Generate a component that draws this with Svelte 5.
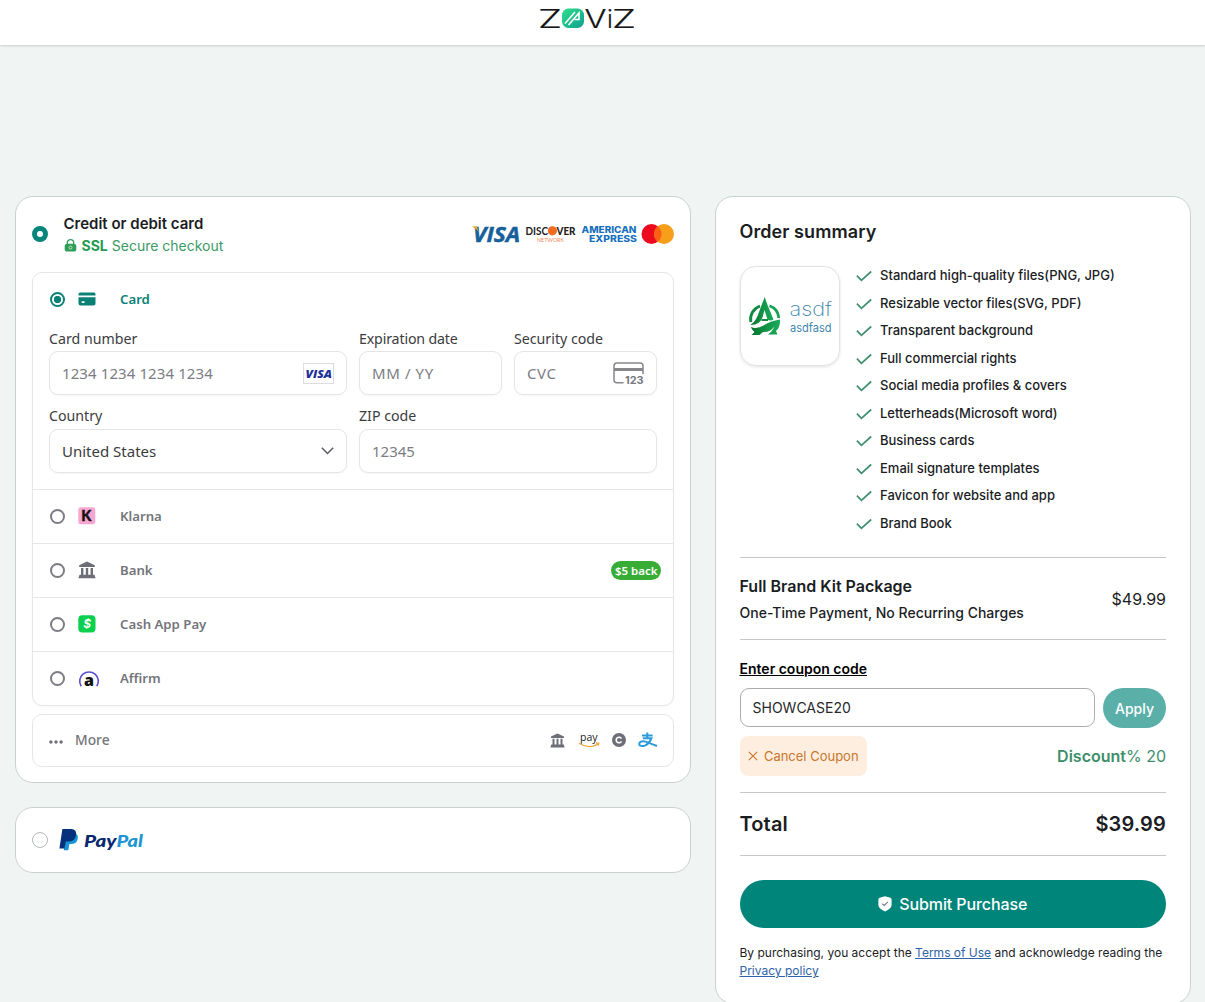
<script>
  const features = [
    'Standard high-quality files(PNG, JPG)',
    'Resizable vector files(SVG, PDF)',
    'Transparent background',
    'Full commercial rights',
    'Social media profiles & covers',
    'Letterheads(Microsoft word)',
    'Business cards',
    'Email signature templates',
    'Favicon for website and app',
    'Brand Book',
  ];

  const methods = [
    { id: 'klarna', label: 'Klarna' },
    { id: 'bank', label: 'Bank', badge: '$5 back' },
    { id: 'cashapp', label: 'Cash App Pay' },
    { id: 'affirm', label: 'Affirm' },
  ];

  let coupon = $state('SHOWCASE20');
  let selected = $state('card');
</script>

{#snippet bankIcon(size)}
  <svg width={size} height={size} viewBox="0 0 18 18" fill="#6d6e78">
    <path d="M9 0.5 L16.8 4.2 V6 H1.2 V4.2 Z M3 7 H5.4 V14 H3 Z M7.8 7 H10.2 V14 H7.8 Z M12.6 7 H15 V14 H12.6 Z M1.5 13.7 H16.5 L17.6 17.3 H0.4 Z" />
  </svg>
{/snippet}

<header>
  <svg width="97" height="30" viewBox="0 -5 97 30">
    <defs>
      <linearGradient id="tile" x1="0" y1="0" x2="1" y2="1">
        <stop offset="0" stop-color="#2fe08b" />
        <stop offset="1" stop-color="#0f9f90" />
      </linearGradient>
    </defs>
    <g font-family="Inter, sans-serif" font-weight="300" font-size="25" fill="#161616" stroke="#161616" stroke-width="0.2">
      <text x="-1" y="20.5" textLength="24" lengthAdjust="spacingAndGlyphs">Z</text>
      <text x="45.5" y="20.5" textLength="22" lengthAdjust="spacingAndGlyphs">V</text>
      <text x="68" y="20.5">i</text>
      <text x="73" y="20.5" textLength="24" lengthAdjust="spacingAndGlyphs">Z</text>
    </g>
    <rect x="23" y="1.5" width="22" height="19.5" rx="6.5" fill="url(#tile)" />
    <path d="M26 16.5 L36 5 M29.5 18 L40 6 V12.5 H35.5" fill="none" stroke="#fff" stroke-width="1.6" />
  </svg>
</header>

<main>
  <div class="left">
    <section class="panel pay">
      <div class="pay-head">
        <span class="radio-on"></span>
        <div class="pay-title">
          <strong>Credit or debit card</strong>
          <span class="ssl">
            <svg width="13" height="13" viewBox="0 0 13 13">
              <path d="M3.3 6 V3.8 A3.2 3.2 0 0 1 9.7 3.8 V6" fill="none" stroke="#2f9e57" stroke-width="1.3" />
              <rect x="0.7" y="4.8" width="11.6" height="7.8" rx="2.6" fill="#2f9e57" />
              <circle cx="6.5" cy="8.6" r="1.5" fill="none" stroke="#d9f0e0" stroke-width="0.8" />
            </svg>
            <b>SSL</b><span>Secure checkout</span>
          </span>
        </div>
        <svg class="brands" width="204" height="32" viewBox="0 -4 204 32">
          <text x="3" y="20" font-family="Open Sans, sans-serif" font-style="italic" font-weight="700" font-size="21.5" fill="#175f9b" stroke="#175f9b" stroke-width="0.5" textLength="47" lengthAdjust="spacingAndGlyphs">VISA</text>
          <path d="M1.5 4.5 H7 L8.5 10 Q6 6 1.5 4.5Z" fill="#f0a52b" />
          <g font-family="Lato, sans-serif" font-weight="900" font-size="12" fill="#222">
            <text x="55.5" y="13" textLength="22.5" lengthAdjust="spacingAndGlyphs" font-weight="700">DISC</text>
            <text x="86.5" y="13" textLength="19" lengthAdjust="spacingAndGlyphs">VER</text>
          </g>
          <circle cx="82.4" cy="8.8" r="4.6" fill="#f26a21" />
          <text x="67" y="20" font-family="Lato, sans-serif" font-size="6.5" fill="#ec8a58" textLength="27" lengthAdjust="spacingAndGlyphs">NETWORK</text>
          <g font-family="Inter, sans-serif" font-weight="800" font-size="8.6" fill="#1870bd">
            <text x="111.5" y="11.2" textLength="55" lengthAdjust="spacingAndGlyphs">AMERICAN</text>
            <text x="119" y="19.7" textLength="48" lengthAdjust="spacingAndGlyphs">EXPRESS</text>
          </g>
          <circle cx="181.5" cy="12" r="10" fill="#eb0a1e" />
          <circle cx="194" cy="12" r="10" fill="#f79e1b" />
          <path d="M187.75 4.2 A10 10 0 0 1 187.75 19.8 A10 10 0 0 1 187.75 4.2Z" fill="#fb6013" />
        </svg>
      </div>

      <div class="methods">
        <div class="card-form">
          <div class="card-row">
            <span class="ring ring-on"></span>
            <span class="icon">
              <svg width="18" height="14" viewBox="0 0 18 14">
                <path d="M2 0.5 H16 Q17.5 0.5 17.5 2 V3.5 H0.5 V2 Q0.5 0.5 2 0.5Z M0.5 5.3 H17.5 V11.5 Q17.5 13.5 15.5 13.5 H2.5 Q0.5 13.5 0.5 11.5Z" fill="#0a8176" />
                <rect x="3.5" y="9.2" width="3.3" height="1.7" rx="0.8" fill="#fff" />
              </svg>
            </span>
            <span class="name active">Card</span>
          </div>

          <div class="fields">
            <label class="wide">
              <span>Card number</span>
              <div class="input">
                <span class="digits">1234 1234 1234 1234</span>
                <svg width="31" height="21" viewBox="0 0 31 21">
                  <rect x="0.5" y="0.5" width="30" height="20" fill="#fff" stroke="#dcdce2" />
                  <text x="2.5" y="14.6" font-family="Open Sans, sans-serif" font-style="italic" font-weight="800" font-size="11" fill="#1d2f9b" textLength="26.5" lengthAdjust="spacingAndGlyphs">VISA</text>
                </svg>
              </div>
            </label>
            <label>
              <span class="tight">Expiration date</span>
              <div class="input"><span class="spaced">MM / YY</span></div>
            </label>
            <label>
              <span>Security code</span>
              <div class="input">
                <span class="spaced">CVC</span>
                <svg width="31" height="26" viewBox="0 -2 31 26">
                  <path d="M10.5 20.8 H4 Q1 20.8 1 17.8 V4 Q1 1 4 1 H27 Q30 1 30 4 V12" fill="none" stroke="#85868c" stroke-width="1.5" />
                  <rect x="1" y="6" width="29" height="3" fill="#85868c" />
                  <text x="12" y="21.5" font-family="Inter, sans-serif" font-weight="700" font-size="10.5" fill="#77787e" textLength="18.7" lengthAdjust="spacingAndGlyphs">123</text>
                </svg>
              </div>
            </label>
            <label class="wide second">
              <span>Country</span>
              <div class="input value">
                <span>United States</span>
                <svg width="13" height="8" viewBox="0 0 13 8">
                  <path d="M0.8 0.8 L6.5 6.5 L12.2 0.8" fill="none" stroke="#5b5c62" stroke-width="1.5" />
                </svg>
              </div>
            </label>
            <label class="wide second">
              <span>ZIP code</span>
              <div class="input"><span>12345</span></div>
            </label>
          </div>
        </div>

        {#each methods as m}
          <div class="row" role="button" tabindex="-1" onclick={() => (selected = m.id)} onkeydown={() => {}}>
            <span class="ring"></span>
            <span class="icon">
              {#if m.id === 'klarna'}
                <svg width="18" height="18" viewBox="0 0 18 18">
                  <rect x="0.3" y="0.3" width="17" height="17" rx="2.5" fill="#f7a8d0" />
                  <text x="3.2" y="14" font-family="Lato, sans-serif" font-weight="900" font-size="14.5" fill="#17101a" stroke="#17101a" stroke-width="0.4">K</text>
                </svg>
              {:else if m.id === 'bank'}
                {@render bankIcon(18)}
              {:else if m.id === 'cashapp'}
                <svg width="18" height="18" viewBox="0 0 18 18">
                  <rect x="0.3" y="0.3" width="17.2" height="17.2" rx="4" fill="#0bcf4f" />
                  <text x="5.2" y="13.2" font-family="Inter, sans-serif" font-style="italic" font-weight="600" font-size="12" fill="#fff">$</text>
                </svg>
              {:else}
                <svg class="affirm" width="22" height="18" viewBox="0 0 22 18">
                  <path d="M3.2 16.3 A9.3 9.3 0 1 1 18.8 16.3" fill="none" stroke="#5a4fcf" stroke-width="1.6" />
                  <text x="6" y="16.3" font-family="Open Sans, sans-serif" font-weight="800" font-size="16" fill="#101010">a</text>
                </svg>
              {/if}
            </span>
            <span class="name">{m.label}</span>
            {#if m.badge}<span class="badge">{m.badge}</span>{/if}
          </div>
        {/each}
      </div>

      <div class="more">
        <svg class="dots" width="14" height="4" viewBox="0 0 14 4" fill="#6d6e78">
          <circle cx="1.9" cy="2" r="1.7" /><circle cx="7" cy="2" r="1.7" /><circle cx="12.1" cy="2" r="1.7" />
        </svg>
        <span>More</span>
        <div class="more-icons">
          {@render bankIcon(15)}
          <svg width="22" height="22" viewBox="0 -3 22 22">
            <text x="2" y="9" font-family="Open Sans, sans-serif" font-size="11" fill="#222" textLength="17.5" lengthAdjust="spacingAndGlyphs">pay</text>
            <path d="M1 11.3 Q10.5 17.5 19.5 12.4 M18 11 L20.8 11.3 L20 13.8" fill="none" stroke="#f0a63a" stroke-width="1.3" />
          </svg>
          <svg width="14" height="14" viewBox="0 0 14 14">
            <circle cx="7" cy="7" r="7" fill="#6d6e78" />
            <path d="M9.4 5.6 A2.8 2.8 0 1 0 9.4 8.4" fill="none" stroke="#fff" stroke-width="1.6" />
          </svg>
          <svg width="20" height="16" viewBox="0 0 20 16">
            <path d="M4 3.4 H14.6 M9.3 0.4 V6.3" fill="none" stroke="#2c9bdb" stroke-width="2" />
            <path d="M4.8 6.3 H13.4 Q11.6 11.2 7.4 13.3 Q4 14.8 1.9 13.5 Q0.4 11.8 2.3 10 Q4.4 8.7 7.6 9.6 Q11 10.8 19 14" fill="none" stroke="#2c9bdb" stroke-width="2" />
          </svg>
        </div>
      </div>
    </section>

    <section class="panel paypal">
      <span class="radio-off"></span>
      <svg width="86" height="26" viewBox="0 0 86 26">
        <path d="M7 6 H15 Q20 7 18.6 12.5 Q17.4 17 12 17 H10.4 L9.3 23.3 H4.8Z" fill="#1696d6" />
        <path d="M3.4 2 H12 Q18.5 2.3 16.9 9 Q15.5 14.5 9.5 14.5 H6.8 L5.5 21.5 H0.4Z" fill="#04307c" />
        <g font-family="Lato, sans-serif" font-weight="900" font-style="italic" font-size="17.2">
          <text x="25" y="20.4" fill="#07286f" textLength="32.5" lengthAdjust="spacingAndGlyphs">Pay</text>
          <text x="57.5" y="20.4" fill="#1d95d3" textLength="26.5" lengthAdjust="spacingAndGlyphs">Pal</text>
        </g>
      </svg>
    </section>
  </div>

  <aside class="panel summary">
    <h2>Order summary</h2>
    <div class="overview">
      <div class="thumb">
        <svg width="84" height="42" viewBox="0 0 84 42">
          <defs>
            <linearGradient id="mark" x1="0" y1="0" x2="1" y2="0">
              <stop offset="0" stop-color="#08752f" />
              <stop offset="1" stop-color="#19ad5b" />
            </linearGradient>
          </defs>
          <g transform="translate(0 1)">
            <g fill="none" stroke="#118a42">
              <path d="M2.8 26 A14.2 14.2 0 0 1 12 10" stroke-width="2.8" />
              <path d="M21.5 9.7 A14.2 14.2 0 0 1 30.8 22" stroke="#17a355" stroke-width="2.8" />
            </g>
            <path d="M16.7 1 L19.5 9 L25.5 23.5 Q22 25.5 19.5 23.5 L16.5 14 L14.3 22 Q11 29.5 2.4 29 Q7 26 9.5 20Z" fill="url(#mark)" />
            <path d="M13.5 24 H20" stroke="#118a42" stroke-width="2" />
            <path d="M2.8 31 Q9 33.5 15.5 29.5 Q22 25 32 23.5 Q32.5 31 28 35 L29.5 38.5 H20 Q24 36 26.5 30.5 Q22 36.5 15 36 L11.5 39 H3.5 L6.5 36 Q4 34 2.8 31Z" fill="url(#mark)" />
          </g>
          <g font-family="Inter, sans-serif" fill="#3e87ad">
            <text x="41.5" y="20.5" font-size="19" font-weight="200" textLength="42.5" lengthAdjust="spacingAndGlyphs">asdf</text>
            <text x="42" y="36.5" font-size="11.5" textLength="41.5" lengthAdjust="spacingAndGlyphs">asdfasd</text>
          </g>
        </svg>
      </div>
      <ul>
        {#each features as f}
          <li>
            <svg width="16" height="12" viewBox="0 0 16 12">
              <path d="M0.9 5.6 L5.4 10.3 L15.2 1.5" fill="none" stroke="#3f8f6c" stroke-width="1.7" />
            </svg>
            {f}
          </li>
        {/each}
      </ul>
    </div>

    <div class="package">
      <div>
        <h3>Full Brand Kit Package</h3>
        <p>One-Time Payment, No Recurring Charges</p>
      </div>
      <span class="price">$49.99</span>
    </div>

    <div class="coupon">
      <span class="coupon-title">Enter coupon code</span>
      <div class="coupon-row">
        <input bind:value={coupon} />
        <button class="apply">Apply</button>
      </div>
      <div class="coupon-row discount-row">
        <button class="cancel">
          <svg width="10" height="10" viewBox="0 0 10 10">
            <path d="M0.8 0.8 L9.2 9.2 M9.2 0.8 L0.8 9.2" stroke="#c9772b" stroke-width="1.1" />
          </svg>
          Cancel Coupon
        </button>
        <span class="discount"><b>Discount</b>% 20</span>
      </div>
    </div>

    <div class="total"><span>Total</span><span>$39.99</span></div>

    <button class="submit">
      <svg width="14" height="16" viewBox="0 0 14 16">
        <path d="M7 0.3 L12.4 1.8 Q13.6 2.2 13.6 3.5 V9 Q13.4 13 7 15.4 Q0.6 13 0.4 9 V3.5 Q0.4 2.2 1.6 1.8Z" fill="#fff" />
        <path d="M4.3 7.8 L6.3 9.4 L9.8 5.9" fill="none" stroke="#6d7f80" stroke-width="1.1" />
      </svg>
      Submit Purchase
    </button>
    <p class="legal">
      By purchasing, you accept the <a href="#terms">Terms of Use</a> and acknowledge reading the
      <a href="#privacy">Privacy policy</a>
    </p>
  </aside>
</main>

<style>
  :global(body) {
    background: #f0f4f3;
    font-family: Inter, sans-serif;
    color: #1b1d1f;
    overflow: hidden;
  }
  svg { display: block; flex: none; overflow: visible; }
  button, input { font-family: inherit; }
  header {
    height: 45px;
    box-sizing: border-box;
    padding: 2px 0 0 539px;
    background: #fff;
    box-shadow: 0 1px 2px rgba(0, 0, 0, 0.16);
  }
  main {
    display: flex;
    align-items: flex-start;
    gap: 24px;
    padding: 151px 14px 0 15px;
  }
  .panel {
    box-sizing: border-box;
    background: #fff;
    border: 1px solid #c9d2d0;
    border-radius: 18px;
  }
  .left { width: 676px; display: flex; flex-direction: column; gap: 24px; }
  .pay { height: 587px; padding: 0 16px; }
  .pay-head { height: 75px; padding-bottom: 1px; display: flex; align-items: center; box-sizing: border-box; }
  .radio-on {
    width: 16px;
    height: 16px;
    box-sizing: border-box;
    border: 5px solid #06857a;
    border-radius: 50%;
  }
  .pay-title { margin-left: 15.5px; padding-top: 1px; display: flex; flex-direction: column; }
  .pay-title strong { font-size: 15px; line-height: 22px; font-weight: 600; }
  .ssl { display: flex; align-items: center; font-size: 14px; line-height: 22px; color: #3c9a66; }
  .ssl svg { margin-right: 5px; }
  .ssl b { margin-right: 4px; color: #259a50; }
  .brands { margin-left: auto; }

  .methods, .more { border: 1px solid #e4e6e8; border-radius: 10px; box-sizing: border-box; }
  .methods { font-family: "Noto Sans", "Open Sans", sans-serif; box-shadow: 0 1px 2px rgba(0, 0, 0, 0.03); }
  .card-form { padding: 0 16px 16px; }
  .card-row { height: 56px; padding-bottom: 4px; box-sizing: border-box; display: flex; align-items: center; }
  .row {
    height: 54px;
    box-sizing: border-box;
    border-top: 1px solid #e4e6e8;
    padding: 0 12px 1px 16px;
    display: flex;
    align-items: center;
  }
  .ring {
    width: 15px;
    height: 15px;
    margin-left: 1px;
    box-sizing: border-box;
    border: 2px solid #7c7d84;
    border-radius: 50%;
  }
  .ring-on { border-color: #0a8176; background: radial-gradient(circle, #0a8176 3.4px, #fff 4px); }
  .icon { width: 42px; margin-left: 13px; }
  .affirm { margin-top: 2px; }
  .name { font-size: 13.2px; font-weight: 600; color: #74757b; }
  .name.active { color: #0a8176; }
  .badge {
    margin-left: auto;
    height: 19px;
    line-height: 19px;
    padding: 0 3.5px;
    border-radius: 10px;
    background: #37ad35;
    color: #fff;
    font-size: 11.5px;
    font-weight: 600;
  }
  .fields { display: grid; grid-template-columns: repeat(4, 143px); gap: 12px; }
  .wide { grid-column: span 2; }
  label > span { display: block; height: 22px; line-height: 19px; font-size: 14.2px; color: #3b3c41; }
  label > .tight { letter-spacing: -0.15px; }
  .second > span { line-height: 17px; }
  .input {
    height: 44px;
    box-sizing: border-box;
    border: 1px solid #e3e5e8;
    border-radius: 9px;
    padding: 0 12px;
    display: flex;
    align-items: center;
    justify-content: space-between;
    font-size: 15px;
    color: #7c7d84;
    box-shadow: 0 1px 2px rgba(0, 0, 0, 0.04);
  }
  .digits { letter-spacing: 0.1px; }
  .spaced { letter-spacing: 0.6px; }
  .value { color: #3b3c41; }

  .more {
    height: 53px;
    margin-top: 8px;
    padding: 0 15px 1px 16px;
    display: flex;
    align-items: center;
    font-family: "Noto Sans", "Open Sans", sans-serif;
    font-size: 13.8px;
    font-weight: 500;
    color: #74757b;
  }
  .more > span { margin-top: -1px; }
  .dots { margin: 4px 12px 0 0; }
  .more-icons { margin-left: auto; display: flex; align-items: center; gap: 12px; }
  .more-icons svg:first-child { margin-right: 1px; }

  .paypal { height: 66px; padding: 0 16px; display: flex; align-items: center; gap: 11px; }
  .radio-off { width: 14px; height: 14px; border: 1px solid #b4b8b8; border-radius: 50%; }

  .summary { width: 476px; height: 808px; padding: 24px 24px 24px 23.5px; }
  h2 { margin: 0; font-size: 18px; line-height: 22px; font-weight: 600; letter-spacing: 0.08px; }
  .overview { display: flex; gap: 16px; margin-top: 19px; }
  .thumb {
    width: 100px;
    height: 100px;
    margin-top: 4px;
    box-sizing: border-box;
    border: 1px solid #dfe3e2;
    border-radius: 16px;
    display: flex;
    align-items: center;
    justify-content: center;
    box-shadow: 0 1px 3px rgba(0, 0, 0, 0.12);
  }
  ul { list-style: none; margin: -0.5px 0 0.5px; padding: 0; }
  li { height: 27.5px; display: flex; align-items: center; gap: 8.5px; font-size: 13px; font-weight: 500; }
  li svg { margin-top: 2px; }
  .package {
    height: 83px;
    box-sizing: border-box;
    margin-top: 20px;
    border: solid #c4c8c8;
    border-width: 1px 0;
    display: flex;
    align-items: center;
    justify-content: space-between;
  }
  h3 { margin: 0 0 5px; font-size: 16px; line-height: 24px; font-weight: 600; }
  .package p { margin: 0; font-size: 14px; line-height: 20px; font-weight: 500; }
  .price { font-size: 16px; }
  .coupon { height: 152px; padding-top: 19px; box-sizing: border-box; }
  .coupon-title {
    display: block;
    line-height: 20px;
    margin-bottom: 9px;
    font-size: 14px;
    font-weight: 600;
    text-decoration: underline;
    color: #000;
  }
  .coupon-row { display: flex; gap: 8px; justify-content: space-between; align-items: flex-start; }
  .coupon-row input {
    flex: 1;
    min-width: 0;
    height: 39px;
    box-sizing: border-box;
    padding: 0 12px;
    border: 1px solid #a9adad;
    border-radius: 9px;
    font-size: 14px;
    color: #26282a;
  }
  .apply {
    width: 63px;
    height: 40px;
    padding: 0;
    border: 0;
    border-radius: 20px;
    background: #5aafa9;
    color: #fff;
    font-size: 14px;
    font-weight: 500;
  }
  .discount-row { margin-top: 8px; align-items: center; }
  .cancel {
    width: 127px;
    height: 40px;
    padding: 0 0 0 1px;
    border: 0;
    border-radius: 8px;
    background: #fdeee0;
    color: #c9772b;
    font-size: 13px;
    display: flex;
    align-items: center;
    justify-content: center;
    gap: 5.5px;
  }
  .discount { font-size: 16px; color: #3d8f6b; }
  .discount b { font-weight: 600; }
  .total {
    height: 64px;
    box-sizing: border-box;
    border: solid #c4c8c8;
    border-width: 1px 0;
    display: flex;
    align-items: center;
    justify-content: space-between;
    font-size: 20px;
    font-weight: 600;
    letter-spacing: 0.15px;
  }
  .submit {
    width: 100%;
    height: 48px;
    margin-top: 24px;
    border: 0;
    border-radius: 24px;
    background: #00857a;
    color: #fff;
    font-size: 16px;
    font-weight: 500;
    letter-spacing: -0.1px;
    display: flex;
    align-items: center;
    justify-content: center;
    gap: 7px;
  }
  .legal { margin: 16px 0 0; font-size: 12px; line-height: 18px; white-space: nowrap; }
  .legal a { color: #2f62a8; }
  .legal a:last-child { display: block; }
</style>
